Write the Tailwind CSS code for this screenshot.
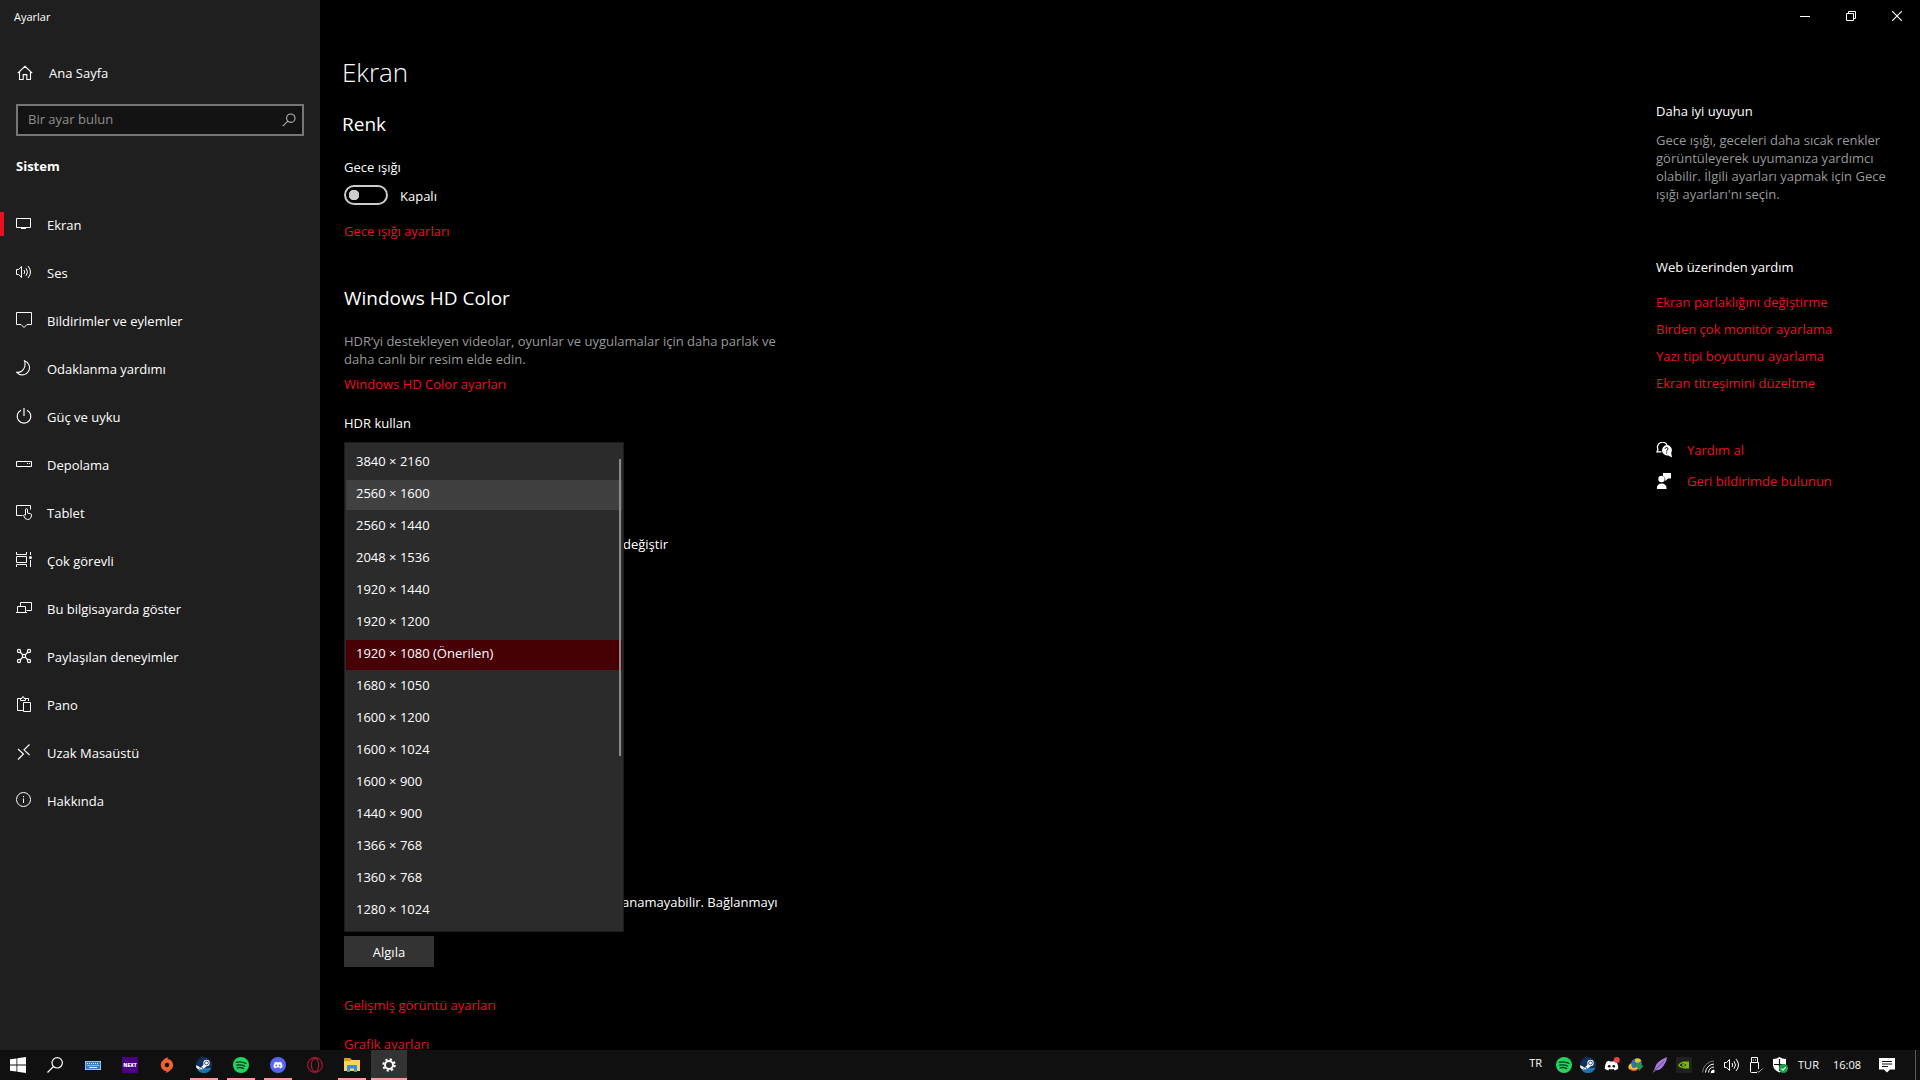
<!DOCTYPE html>
<html lang="tr">
<head>
<meta charset="utf-8">
<title>Ayarlar</title>
<script src="https://cdn.jsdelivr.net/npm/@tailwindcss/browser@4"></script>
</head>
<body class="flex h-screen flex-col overflow-hidden bg-black font-['Open_Sans','Noto_Sans',sans-serif] text-[13px] leading-5 text-white">

<!-- Shared icon symbols -->
<svg class="hidden" aria-hidden="true">
  <symbol id="spotify" viewBox="0 0 16 16"><circle cx="8" cy="8" r="8" fill="#1ed760"/><path d="M3.2 5.4c3.2-.9 6.700-.6 9.600 1M3.700 8.200c2.700-.7 5.500-.4 7.900.9M4.200 10.800c2.200-.5 4.500-.3 6.400.8" fill="none" stroke="#0c3319" stroke-width="1.300" stroke-linecap="round"/></symbol>
  <symbol id="steam" viewBox="0 0 16 16"><circle cx="8" cy="8" r="8" fill="#12305e"/><path d="M.6 11A8 8 0 0 0 15.400 11z" fill="#1b75b5"/><path d="M0 8.300l5 2.200 3-3.500 2.500 2.500-3.700 2.500A2.300 2.300 0 0 1 3 12.200L.5 11z" fill="#fff"/><circle cx="10.500" cy="6" r="3.200" fill="#fff"/><circle cx="10.500" cy="6" r="1.900" fill="#fff" stroke="#12305e" stroke-width=".8"/><circle cx="5.200" cy="11.300" r="1.500" fill="none" stroke="#12305e" stroke-width=".6"/></symbol>
  <symbol id="clyde" viewBox="0 0 16 16"><path d="M5.500 2.800 3 3.600C1.400 6 .7 8.600.9 11.400c1.200 1 2.400 1.500 3.700 1.800l.9-1.500c1.700.5 3.300.5 5 0l.9 1.500c1.300-.3 2.500-.9 3.700-1.800.3-3-.5-5.500-2.100-7.800l-2.500-.8-.6 1c-1.300-.2-2.500-.2-3.800 0z" fill="#fff"/></symbol>
</svg>

<div class="flex min-h-0 flex-1 overflow-hidden">
  <!-- Navigation pane -->
  <aside class="w-80 shrink-0 bg-[#1f1f1f]">
    <h1 class="h-8 pl-3.5 pt-[7px] text-[11px] leading-5">Ayarlar</h1>
    <a href="#" class="mt-[23px] flex h-9 items-center pl-[17px]">
      <svg class="size-4" viewBox="0 0 16 16" fill="none" stroke="#fff" stroke-width="1.100"><path d="M.8 8.200 8 1.300l7.200 6.900M2.500 6.800v7.700h3.700V9.600h3.600v4.900h3.700V6.800"/></svg>
      <span class="ml-4">Ana Sayfa</span>
    </a>
    <div class="mx-4 mt-[13px] flex h-8 items-center border-2 border-[#767676] bg-[#131313] pl-2.5 pr-1.5">
      <input type="text" aria-label="Bir ayar bulun" placeholder="Bir ayar bulun" class="min-w-0 flex-1 bg-transparent pb-0.5 leading-5 outline-none placeholder:text-[#8f8f8f]">
      <svg class="size-3.5" viewBox="0 0 14 14" fill="none" stroke="#b5b5b5" stroke-width="1.100"><circle cx="8.800" cy="5.200" r="4.200"/><path d="M5.800 8.200.8 13.200"/></svg>
    </div>
    <h2 class="mt-5 pl-4 font-bold">Sistem</h2>
    <nav class="mt-6">
      <a href="#" class="flex h-12 items-center"><span class="h-6 w-1 bg-[#e81123]"></span>
        <svg class="ml-3 size-4" viewBox="0 0 16 16" fill="none" stroke="#fff"><path d="M.5 2.500h14v9H.5zM5 12.500h5M7.500 11.500v1"/></svg><span class="ml-[15px] pt-0.5">Ekran</span></a>
      <a href="#" class="flex h-12 items-center pl-4">
        <svg class="size-4" viewBox="0 0 16 16" fill="none" stroke="#fff"><path d="M.5 5.500h2.200l2.800-3v11l-2.800-3H.5zM8 6q1.400 2 0 4M10 4.200q3 3.800 0 7.600M12 2q5 6 0 12"/></svg><span class="ml-[15px] pt-0.5">Ses</span></a>
      <a href="#" class="flex h-12 items-center pl-4">
        <svg class="size-4" viewBox="0 0 16 16" fill="none" stroke="#fff"><path d="M.5.5h15v12H11l-3 3-3-3H.5z"/></svg><span class="ml-[15px] pt-0.5">Bildirimler ve eylemler</span></a>
      <a href="#" class="flex h-12 items-center pl-4">
        <svg class="size-4" viewBox="0 0 16 16" fill="none" stroke="#fff" stroke-width="1.100"><path d="M8.500.7a7.300 7.300 0 1 1-8 11.500C6.500 13.500 10.500 7 8.500.7z"/></svg><span class="ml-[15px] pt-0.5">Odaklanma yardımı</span></a>
      <a href="#" class="flex h-12 items-center pl-4">
        <svg class="size-4" viewBox="0 0 16 16" fill="none" stroke="#fff" stroke-width="1.200"><path d="M5 2.300a6.800 6.800 0 1 0 6 0M8 0v8"/></svg><span class="ml-[15px] pt-0.5">Güç ve uyku</span></a>
      <a href="#" class="flex h-12 items-center pl-4">
        <svg class="size-4" viewBox="0 0 16 16" fill="none" stroke="#fff"><path d="M.5 5.500h15v5H.5zM11 7.500h1M13 7.500h1"/></svg><span class="ml-[15px] pt-0.5">Depolama</span></a>
      <a href="#" class="flex h-12 items-center pl-4">
        <svg class="size-4" viewBox="0 0 16 16" fill="none" stroke="#fff"><path d="M6.500 11.500h-6v-10h14v4M9.500 11V5.200q1-1.200 2 0V9l3 .7q1 .3 1 1.300-.2 4.500-4 4.500-2.500 0-4-4 .8-1.200 2-.3"/></svg><span class="ml-[15px] pt-0.5">Tablet</span></a>
      <a href="#" class="flex h-12 items-center pl-4">
        <svg class="size-4" viewBox="0 0 16 16" fill="none" stroke="#fff"><path d="M.5 0v2.500h10V0M.5 4.500h10v6H.5zM.5 15v-2.500h10V15M14.500 0v3M14.500 8v7"/><circle cx="14.500" cy="5.500" r="1.500" fill="#fff" stroke="none"/></svg><span class="ml-[15px] pt-0.5">Çok görevli</span></a>
      <a href="#" class="flex h-12 items-center pl-4">
        <svg class="size-4" viewBox="0 0 16 16" fill="none" stroke="#fff"><path d="M4.500 6V2.500h11v8h-5M1.500 12V6.500h8V12M0 12.500h11"/></svg><span class="ml-[15px] pt-0.5">Bu bilgisayarda göster</span></a>
      <a href="#" class="flex h-12 items-center pl-4">
        <svg class="size-4" viewBox="0 0 16 16" fill="none" stroke="#fff" stroke-width="1.200"><circle cx="3" cy="3" r="1.600"/><circle cx="13" cy="3" r="1.600"/><circle cx="3" cy="13" r="1.600"/><circle cx="13" cy="13" r="1.600"/><circle cx="8" cy="8" r="1.600"/><path d="M4 4l3 3M12 4 9 7M4 12l3-3M12 12 9 9"/></svg><span class="ml-[15px] pt-0.5">Paylaşılan deneyimler</span></a>
      <a href="#" class="flex h-12 items-center pl-4">
        <svg class="size-4" viewBox="0 0 16 16" fill="none" stroke="#fff"><path d="M7 14.500H1.500v-12h3M9.500 2.500h3V5M4.500 4.500v-2h1.500q0-2 1-2t1 2h1.500v2zM7.500 6.500h7v9h-7z"/></svg><span class="ml-[15px] pt-0.5">Pano</span></a>
      <a href="#" class="flex h-12 items-center pl-4">
        <svg class="size-4" viewBox="0 0 16 16" fill="none" stroke="#fff" stroke-width="1.100"><path d="M2 5l5.500 5L2 15.500M13.500.5 8 5.800l5.500 5.200"/></svg><span class="ml-[15px] pt-0.5">Uzak Masaüstü</span></a>
      <a href="#" class="flex h-12 items-center pl-4">
        <svg class="size-4" viewBox="0 0 16 16" fill="none" stroke="#fff"><circle cx="7.500" cy="7.500" r="7"/><path d="M7.500 6.500V11M7.500 4v1.200"/></svg><span class="ml-[15px] pt-0.5">Hakkında</span></a>
    </nav>
  </aside>

  <div class="flex min-w-0 flex-1 flex-col">
    <!-- Window controls -->
    <div class="flex h-8 shrink-0 justify-end">
      <button aria-label="Simge durumuna küçült" class="flex w-[46px] items-center justify-center"><svg class="size-2.5" viewBox="0 0 10 10" stroke="#fff"><path d="M0 5.500h10"/></svg></button>
      <button aria-label="Önceki boyut" class="flex w-[46px] items-center justify-center"><svg class="size-2.5" viewBox="0 0 10 10" fill="none" stroke="#fff"><path d="M.5 2.500h7v7h-7zM2.500 2.500v-2h7v7h-2"/></svg></button>
      <button aria-label="Kapat" class="flex w-[46px] items-center justify-center"><svg class="size-2.5" viewBox="0 0 10 10" stroke="#fff" stroke-width="1.100"><path d="M0 0l10 10M10 0 0 10"/></svg></button>
    </div>

    <div class="flex min-h-0 flex-1">
      <main class="min-w-0 flex-1 pl-6 pt-[22px]">
        <h2 class="-ml-0.5 text-[26px] font-light leading-9">Ekran</h2>
        <h3 class="-ml-0.5 mt-[21px] text-[19px] leading-[26px]">Renk</h3>
        <p class="mt-5">Gece ışığı</p>
        <label class="mt-2 flex h-5 items-center">
          <input type="checkbox" role="switch" class="h-5 w-11 appearance-none rounded-full border-2 border-[#ccc] bg-[radial-gradient(circle_at_8px_8px,#ccc_5px,transparent_5.5px)]">
          <span class="ml-3 pt-0.5">Kapalı</span>
        </label>
        <a href="#" class="mt-4 block w-fit text-[#e81123]">Gece ışığı ayarları</a>

        <h3 class="mt-11 text-[19px] leading-[26px]">Windows HD Color</h3>
        <p class="mt-[21px] leading-[18px] text-[#999]">HDR’yi destekleyen videolar, oyunlar ve uygulamalar için daha parlak ve<br>daha canlı bir resim elde edin.</p>
        <a href="#" class="mt-1.5 block w-fit text-[#e81123]">Windows HD Color ayarları</a>
        <p class="mt-[19px]">HDR kullan</p>

        <!-- Text beside the open resolution list -->
        <div class="relative">
          <p class="pl-[279px] pt-[101px]">değiştir</p>
          <p class="pl-[278px] pt-[338px]">anamayabilir. Bağlanmayı</p>
          <div class="absolute left-0 top-[9px] w-[280px]">
            <select size="15" aria-label="Ekran çözünürlüğü" class="block h-[490px] w-full appearance-none overflow-hidden border border-[#1c1c1c] bg-[#2b2b2b] px-px py-[5px] text-white outline-none">
              <option class="mb-0.5 h-[30px] px-2.5 py-1 leading-5">3840 × 2160</option>
              <option class="mb-0.5 h-[30px] bg-[#404040] px-2.5 py-1 leading-5">2560 × 1600</option>
              <option class="mb-0.5 h-[30px] px-2.5 py-1 leading-5">2560 × 1440</option>
              <option class="mb-0.5 h-[30px] px-2.5 py-1 leading-5">2048 × 1536</option>
              <option class="mb-0.5 h-[30px] px-2.5 py-1 leading-5">1920 × 1440</option>
              <option class="mb-0.5 h-[30px] px-2.5 py-1 leading-5">1920 × 1200</option>
              <option selected class="mb-0.5 h-[30px] bg-[linear-gradient(#470006,#470006)] px-2.5 py-1 leading-5 text-white">1920 × 1080 (Önerilen)</option>
              <option class="mb-0.5 h-[30px] px-2.5 py-1 leading-5">1680 × 1050</option>
              <option class="mb-0.5 h-[30px] px-2.5 py-1 leading-5">1600 × 1200</option>
              <option class="mb-0.5 h-[30px] px-2.5 py-1 leading-5">1600 × 1024</option>
              <option class="mb-0.5 h-[30px] px-2.5 py-1 leading-5">1600 × 900</option>
              <option class="mb-0.5 h-[30px] px-2.5 py-1 leading-5">1440 × 900</option>
              <option class="mb-0.5 h-[30px] px-2.5 py-1 leading-5">1366 × 768</option>
              <option class="mb-0.5 h-[30px] px-2.5 py-1 leading-5">1360 × 768</option>
              <option class="mb-0.5 h-[30px] px-2.5 py-1 leading-5">1280 × 1024</option>
            </select>
            <span class="absolute right-[3px] top-[17px] h-[297px] w-0.5 bg-[#8a8a8a]"></span>
          </div>
        </div>

        <button class="mt-6 block h-[31px] w-[90px] bg-[#333]">Algıla</button>
        <a href="#" class="mt-7 block w-fit text-[#e81123]">Gelişmiş görüntü ayarları</a>
        <a href="#" class="mt-[19px] block w-fit text-[#e81123]">Grafik ayarları</a>
      </main>

      <!-- Related help -->
      <aside class="w-[264px] shrink-0 pt-[69px]">
        <h4>Daha iyi uyuyun</h4>
        <p class="mt-2.5 leading-[18px] text-[#999]">Gece ışığı, geceleri daha sıcak renkler<br>görüntüleyerek uyumanıza yardımcı<br>olabilir. İlgili ayarları yapmak için Gece<br>ışığı ayarları'nı seçin.</p>
        <h4 class="mt-[54px]">Web üzerinden yardım</h4>
        <div class="mt-3 flex flex-col items-start leading-[27px] text-[#e81123]">
          <a href="#">Ekran parlaklığını değiştirme</a>
          <a href="#">Birden çok monitör ayarlama</a>
          <a href="#">Yazı tipi boyutunu ayarlama</a>
          <a href="#">Ekran titreşimini düzeltme</a>
        </div>
        <a href="#" class="mt-[43px] flex items-center text-[#e81123]">
          <svg class="size-4" viewBox="0 0 16 16"><path d="M5.500 9.800H1l1-2.300A5 5 0 1 1 11 3" fill="none" stroke="#fff" stroke-width="1.300"/><path d="M10.500 3a5.200 5.200 0 0 1 4.700 7.700l.8 4.800-3.700-2A5.300 5.300 0 1 1 10.500 3z" fill="#fff"/><path d="M9 6.800q.2-1.300 1.500-1.300T12 6.800q0 .8-1.300 1.600v1M10.700 10.300v1.200" fill="none" stroke="#000"/></svg>
          <span class="ml-[15px]">Yardım al</span></a>
        <a href="#" class="mt-[11px] flex items-center text-[#e81123]">
          <svg class="size-4" viewBox="0 0 16 16" fill="#fff"><path d="M7 0h8v5.500h-3L9.500 8 9 5 7 2.500z"/><circle cx="5.500" cy="6" r="3.200"/><path d="M.8 16q0-5.500 4.900-5.500T10.600 16z"/></svg>
          <span class="ml-[15px]">Geri bildirimde bulunun</span></a>
      </aside>
    </div>
  </div>
</div>

<!-- Taskbar -->
<footer class="flex h-[30px] shrink-0 justify-between bg-[#101010] text-[11px]">
  <div class="flex gap-px">
    <button aria-label="Başlat" class="flex w-9 items-center justify-center"><svg class="size-4" viewBox="0 0 16 16" fill="#fff"><path d="M0 2.300 6.500 1.400v6.200H0zM7.300 1.300 16 0v7.600H7.300zM0 8.400h6.500v6.200L0 13.700zM7.300 8.400H16V16l-8.700-1.300z"/></svg></button>
    <button aria-label="Ara" class="mr-px flex w-9 items-center justify-center"><svg class="size-4" viewBox="0 0 16 16" fill="none" stroke="#fff" stroke-width="1.200"><circle cx="10.200" cy="5.800" r="5.200"/><path d="M6.500 9.500.5 15.500"/></svg></button>
    <button aria-label="Ekran Klavyesi" class="flex w-9 items-center justify-center"><svg class="size-4" viewBox="0 0 16 16"><path d="M0 4h16v9H0z" fill="#b9dcf5"/><path d="M.7 4.700h14.600v7.600H.7z" fill="#2e7fc4"/><path d="M2 6.500h12M2.500 8.500h11" stroke="#e6f4ff" stroke-dasharray="1 1"/><path d="M4 10.500h8" stroke="#e6f4ff"/></svg></button>
    <button aria-label="Next" class="flex w-9 items-center justify-center"><svg class="size-4" viewBox="0 0 16 16"><path d="M0 0h16v16H0z" fill="#4b0082"/><text x="8" y="10" text-anchor="middle" fill="#fff" font-size="5" font-weight="800">NEXT</text></svg></button>
    <button aria-label="Origin" class="flex w-9 items-center justify-center"><svg class="size-4" viewBox="0 0 16 16" fill="#f0622b"><path fill-rule="evenodd" d="M9.500 0q-1 1-.9 2A6 6 0 0 1 12 12.500Q10 15 6.500 16q1-1 .9-2A6 6 0 0 1 3.300 4Q5.500 1 9.500 0zM8 5.700a2.300 2.300 0 1 0 0 4.600 2.300 2.300 0 0 0 0-4.600z"/></svg></button>
    <button aria-label="Steam" class="relative flex w-9 items-center justify-center"><svg class="size-4"><use href="#steam"/></svg><span class="absolute bottom-0 left-1 h-0.5 w-7 bg-[#ff99a4]"></span></button>
    <button aria-label="Spotify" class="relative flex w-9 items-center justify-center"><svg class="size-4"><use href="#spotify"/></svg><span class="absolute bottom-0 left-1 h-0.5 w-7 bg-[#ff99a4]"></span></button>
    <button aria-label="Discord" class="relative flex w-9 items-center justify-center"><svg class="size-4" viewBox="0 0 16 16"><circle cx="8" cy="8" r="8" fill="#5865f2"/><svg x="3" y="3" width="10" height="10"><use href="#clyde"/></svg><circle cx="6.400" cy="8.400" r=".9" fill="#5865f2"/><circle cx="9.600" cy="8.400" r=".9" fill="#5865f2"/></svg><span class="absolute bottom-0 left-1 h-0.5 w-7 bg-[#ff99a4]"></span></button>
    <button aria-label="Opera GX" class="flex w-9 items-center justify-center"><svg class="size-4" viewBox="0 0 16 16" fill="none" stroke="#b01535" stroke-width="1.100"><circle cx="8" cy="8" r="7.400"/><ellipse cx="8" cy="8" rx="3.600" ry="6.600"/></svg></button>
    <button aria-label="Dosya Gezgini" class="relative flex w-9 items-center justify-center"><svg class="size-4" viewBox="0 0 16 16"><path d="M0 1h6l2 2v2H0z" fill="#e09b0b"/><path d="M0 4h6l1.500-1H16v11H0z" fill="#ffd15c"/><path d="M3 15V9q0-1 1-1h8q1 0 1 1v6h-3v-3.500H6V15z" fill="#3a8fdc"/></svg><span class="absolute bottom-0 left-1 h-0.5 w-7 bg-[#ff99a4]"></span></button>
    <button aria-label="Ayarlar" class="relative flex w-9 items-center justify-center bg-[#333]"><svg class="size-3.5" viewBox="0 0 14 14" fill="none" stroke="#fff"><circle cx="7" cy="7" r="4" stroke-width="2"/><circle cx="7" cy="7" r="5.700" stroke-width="2" stroke-dasharray="2.240 2.240"/></svg><span class="absolute bottom-0 left-0 h-0.5 w-9 bg-[#ff99a4]"></span></button>
  </div>

  <div class="flex items-center">
    <span class="mr-2.5 pb-1">TR</span>
    <div class="flex items-center">
      <span class="flex w-6 justify-center"><svg class="size-4"><use href="#spotify"/></svg></span>
      <span class="flex w-6 justify-center"><svg class="size-4"><use href="#steam"/></svg></span>
      <span class="flex w-6 justify-center"><svg class="size-4" viewBox="0 0 16 16"><svg y="1" width="15" height="15"><use href="#clyde"/></svg><circle cx="5.200" cy="9.300" r="1.300" fill="#101010"/><circle cx="9.800" cy="9.300" r="1.300" fill="#101010"/><circle cx="12.800" cy="3" r="3" fill="#ed4245"/></svg></span>
      <span class="flex w-6 justify-center"><svg class="size-4" viewBox="0 0 16 16"><circle cx="8.500" cy="7" r="5.500" fill="#2f6fc4"/><path d="M7 2q4-2 6.500 1.500L10 6 7 5z" fill="#e9c32c"/><path d="M3 6Q-1 9 1 12q4 3 9 0l-1-2q-4 2-5 0z" fill="#f2c12e"/><path d="M2 12q4 3 8 0" fill="none" stroke="#d94a2a" stroke-width="1.500"/><path d="M9 5.500 15.500 9 11 14V10.500L7 9z" fill="#1f9b3a"/></svg></span>
      <span class="flex w-6 justify-center"><svg class="size-4" viewBox="0 0 16 16"><path d="M15 0Q7 3 4 8l-1.500 4L.5 16l3-2.500q6-.5 8.500-5.500Q15 4 15 0z" fill="#a678d8"/><path d="M2 14 12 4" stroke="#5d3a91" stroke-width=".8"/></svg></span>
      <span class="flex w-6 justify-center"><svg class="size-4" viewBox="0 0 16 16"><path d="M0 0h16v16H0z" fill="#202020"/><path d="M7 4.500h6v7H7z" fill="#76b900"/><path d="M2 8q3-4 7-3 2 1 3 3-2 3-5 3-4 0-5-3z" fill="#76b900"/><path d="M3.500 8Q7 4.500 10.500 8 7 11.500 3.500 8z" fill="#202020"/><circle cx="7.500" cy="8" r="1.400" fill="#76b900"/></svg></span>
      <span class="flex w-6 justify-center"><svg class="size-4" viewBox="0 0 16 16" fill="none" stroke="#fff"><path d="M2.500 15.500A12 12 0 0 1 14 4" stroke="#777"/><path d="M5.500 15.500A9 9 0 0 1 14 7M8.500 15.500A6 6 0 0 1 14 10"/><path d="M11 15.500a3 3 0 0 1 3-2.500v2.500z" fill="#fff"/></svg></span>
      <span class="flex w-6 justify-center"><svg class="size-4" viewBox="0 0 16 16" fill="none" stroke="#fff"><path d="M.5 5.500h2.200l2.800-3v11l-2.800-3H.5zM8 6q1.400 2 0 4M10 4.200q3 3.800 0 7.600M12 2q5 6 0 12"/></svg></span>
      <span class="flex w-6 justify-center"><svg class="size-4" viewBox="0 0 16 16" fill="none" stroke="#fff"><path d="M3.500 5.500v-5h6v5M9 15.500H3.500q-1 0-1-1v-9h8V12M5 3h1M7 3h1"/><path d="M9 13.500l1.800 1.800 3.700-3.700" stroke="#aaa"/></svg></span>
      <span class="flex w-6 justify-center"><svg class="size-4" viewBox="0 0 16 16"><path d="M7.500 0Q10 2 14 2v6q0 5-6.500 7.500Q1 13 1 8V2q4 0 6.500-2z" fill="#fff"/><path d="M7.500 2v12M2 7.500h11" stroke="#101010" stroke-width="1.200"/><circle cx="11.500" cy="11.500" r="4.500" fill="#16a34a"/><path d="M9.500 11.600l1.500 1.500 2.700-2.900" fill="none" stroke="#fff" stroke-width="1.200"/></svg></span>
    </div>
    <span class="ml-1.5">TUR</span>
    <time class="ml-3.5">16:08</time>
    <button aria-label="Bildirimler" class="ml-[18px] mr-5"><svg class="size-4" viewBox="0 0 16 16"><path d="M0 1h16v11.500h-5L8 15.500l-3-3H0z" fill="#fff"/><path d="M3 4.500h10M3 7h10M3 9.500h6" stroke="#101010"/></svg></button>
    <span class="mr-1 h-full w-px bg-[#5a5a5a]"></span>
  </div>
</footer>
</body>
</html>
